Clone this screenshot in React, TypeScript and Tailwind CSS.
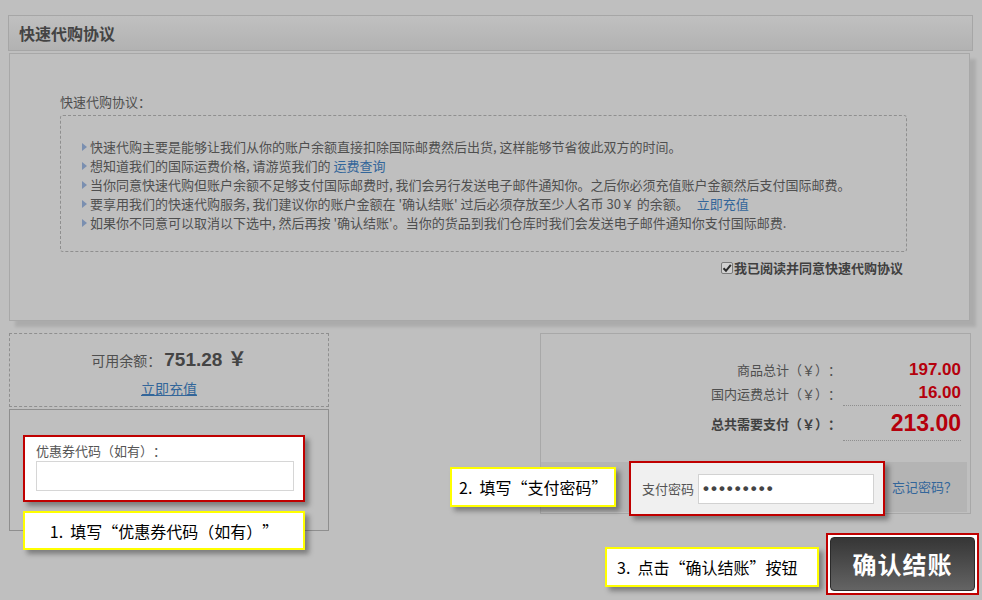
import React from "react";

const F = { fontFamily: '"Noto Sans CJK SC", "Noto Sans", sans-serif' };
const NUM = { fontFamily: '"Liberation Sans", "Noto Sans CJK SC", sans-serif' };

function Bullet() {
  return (
    <svg width="5" height="8" viewBox="0 0 5 8" className="mr-[3px] shrink-0">
      <path d="M0 0 L5 4 L0 8 Z" fill="#7a8fb0" />
    </svg>
  );
}

export default function App() {
  const lines: React.ReactNode[] = [
    <>快速代购主要是能够让我们从你的账户余额直接扣除国际邮费然后出货, 这样能够节省彼此双方的时间。</>,
    <>
      想知道我们的国际运费价格, 请游览我们的 <span className="text-[#33669a]">运费查询</span>
    </>,
    <>当你同意快速代购但账户余额不足够支付国际邮费时, 我们会另行发送电子邮件通知你。之后你必须充值账户金额然后支付国际邮费。</>,
    <>
      要享用我们的快速代购服务, 我们建议你的账户金额在 '确认结账' 过后必须存放至少人名币 30￥ 的余额。
      <span className="text-[#33669a] ml-[8px]">立即充值</span>
    </>,
    <>如果你不同意可以取消以下选中, 然后再按 '确认结账'。当你的货品到我们仓库时我们会发送电子邮件通知你支付国际邮费.</>,
  ];

  return (
    <div className="relative w-[982px] h-[600px] overflow-hidden bg-[#bfbfbf] text-[#4f4f4f] [text-spacing-trim:space-all]" style={F}>
      {/* header */}
      <div className="pt-[15px] pl-[8px]">
        <div className="w-[965px] h-[36px] border border-[#a6a6a6] bg-gradient-to-b from-[#c0c0c0] to-[#b2b2b2] flex items-center pl-[10px]">
          <span className="text-[16px] font-bold text-[#444] leading-none">快速代购协议</span>
        </div>
      </div>

      {/* main panel */}
      <div className="ml-[9px] mt-[2px] w-[961px] h-[268px] border border-[#a8a8a8] shadow-[6px_6px_3px_rgba(0,0,0,0.1)] pl-[50px] pt-[39px]">
        <div className="text-[13px] leading-[18px]">快速代购协议：</div>
        <div className="mt-[4px] w-[847px] h-[137px] border border-dashed border-[#8f8f8f] rounded-[3px] pt-[21px] pl-[21px]">
          {lines.map((l, i) => (
            <div key={i} className="flex items-center h-[19px] text-[13px] whitespace-nowrap">
              <Bullet />
              <span>{l}</span>
            </div>
          ))}
        </div>
        <div className="w-[847px] flex justify-end items-center mt-[7px] pr-[4px]">
          <span className="w-[12px] h-[12px] border border-[#7a7a7a] rounded-[2px] bg-[#d0d0d0] flex items-center justify-center mr-[1px]">
            <svg width="10" height="10" viewBox="0 0 10 10">
              <path d="M1.5 5.2 L4 7.8 L8.8 1.8" stroke="#2a2a2a" strokeWidth="2" fill="none" />
            </svg>
          </span>
          <span className="text-[13px] font-bold text-[#404040] leading-[18px]">我已阅读并同意快速代购协议</span>
        </div>
      </div>

      {/* bottom row */}
      <div className="flex justify-between mt-[12px] pl-[9px] pr-[11px]">
        <div className="w-[320px]">
          <div className="h-[74px] border border-dashed border-[#8f8f8f] flex flex-col items-center pt-[12px]">
            <div className="flex items-baseline">
              <span className="text-[14px] mr-[3px]">可用余额：</span>
              <span className="text-[19px] font-bold text-[#444]" style={NUM}>751.28 ￥</span>
            </div>
            <span className="mt-[3px] text-[14px] text-[#33669a] underline">立即充值</span>
          </div>
          <div className="mt-[2px] h-[122px] border border-[#8f8f8f]" />
        </div>

        <div className="w-[431px] h-[181px] border border-[#a8a8a8] flex flex-col">
          <div className="pt-[25px] pr-[9px] flex flex-col">
            <div className="flex items-center h-[22px]">
              <span className="w-[300px] text-right text-[13px]">商品总计（￥）：</span>
              <span className="flex-1 text-right text-[17px] font-bold text-[#b5000c]" style={NUM}>197.00</span>
            </div>
            <div className="flex items-center h-[25px]">
              <span className="w-[300px] text-right text-[13px]">国内运费总计（￥）：</span>
              <span className="ml-[2px] flex-1 text-right text-[17px] font-bold text-[#b5000c] border-b border-dotted border-[#8f8f8f] h-[25px] leading-[24px]" style={NUM}>16.00</span>
            </div>
            <div className="flex items-center h-[35px]">
              <span className="w-[300px] text-right text-[13px] font-bold text-[#404040]">总共需要支付（￥）：</span>
              <span className="ml-[2px] flex-1 text-right text-[23px] font-bold text-[#b5000c] border-b border-dotted border-[#8f8f8f] h-[35px] leading-[34px]" style={NUM}>213.00</span>
            </div>
          </div>
          <div className="mt-auto mb-[1px] mr-[3px] h-[50px] bg-[#b4b4b4] flex items-center justify-end pr-[10px]">
            <span className="text-[13px] text-[#33669a]">忘记密码？</span>
          </div>
        </div>
      </div>

      {/* annotation: coupon */}
      <div className="absolute left-[23px] top-[435px] w-[282px] h-[67px] border-2 border-[#c00000] bg-white shadow-[4px_4px_5px_rgba(0,0,0,0.35)] pl-[11px] pt-[6px]">
        <div className="text-[13px] leading-[16px] text-[#555]">优惠券代码（如有）：</div>
        <div className="mt-[2px] w-[258px] h-[30px] border border-[#d6d6d6] bg-white" />
      </div>
      <div className="absolute left-[23px] top-[511px] w-[282px] h-[39px] border-2 border-[#ffff00] bg-white shadow-[4px_4px_5px_rgba(0,0,0,0.35)] flex items-center justify-center">
        <span className="text-[16px] text-black whitespace-pre">1.  填写“优惠券代码（如有）”</span>
      </div>

      {/* annotation: password */}
      <div className="absolute left-[450px] top-[467px] w-[166px] h-[40px] border-2 border-[#ffff00] bg-white shadow-[4px_4px_5px_rgba(0,0,0,0.35)] flex items-center pl-[7px]">
        <span className="text-[16px] text-black whitespace-pre">2.  填写“支付密码”</span>
      </div>
      <div className="absolute left-[629px] top-[461px] w-[256px] h-[55px] border-2 border-[#c00000] bg-[#f0f0f0] shadow-[4px_4px_5px_rgba(0,0,0,0.35)] flex items-center pl-[11px]">
        <span className="text-[13px] text-[#555]">支付密码</span>
        <div className="ml-[4px] w-[176px] h-[30px] border border-[#d2d2d2] bg-white flex items-center pl-[4px]">
          <span className="text-[17px] font-bold text-[#444] tracking-[2px]" style={NUM}>•••••••••</span>
        </div>
      </div>

      {/* annotation: submit */}
      <div className="absolute left-[605px] top-[547px] w-[214px] h-[40px] border-2 border-[#ffff00] bg-white shadow-[4px_4px_5px_rgba(0,0,0,0.35)] flex items-center pl-[10px]">
        <span className="text-[16px] text-black whitespace-pre">3.  点击“确认结账”按钮</span>
      </div>
      <div className="absolute left-[826px] top-[533px] w-[153px] h-[62px] border-2 border-[#c00000] bg-white p-[2px]">
        <div className="w-full h-full rounded-[4px] bg-gradient-to-b from-[#363636] to-[#646464] border border-[#2a2a2a] flex items-center justify-center">
          <span className="text-[24px] font-bold text-white leading-none tracking-[1px]">确认结账</span>
        </div>
      </div>
    </div>
  );
}
